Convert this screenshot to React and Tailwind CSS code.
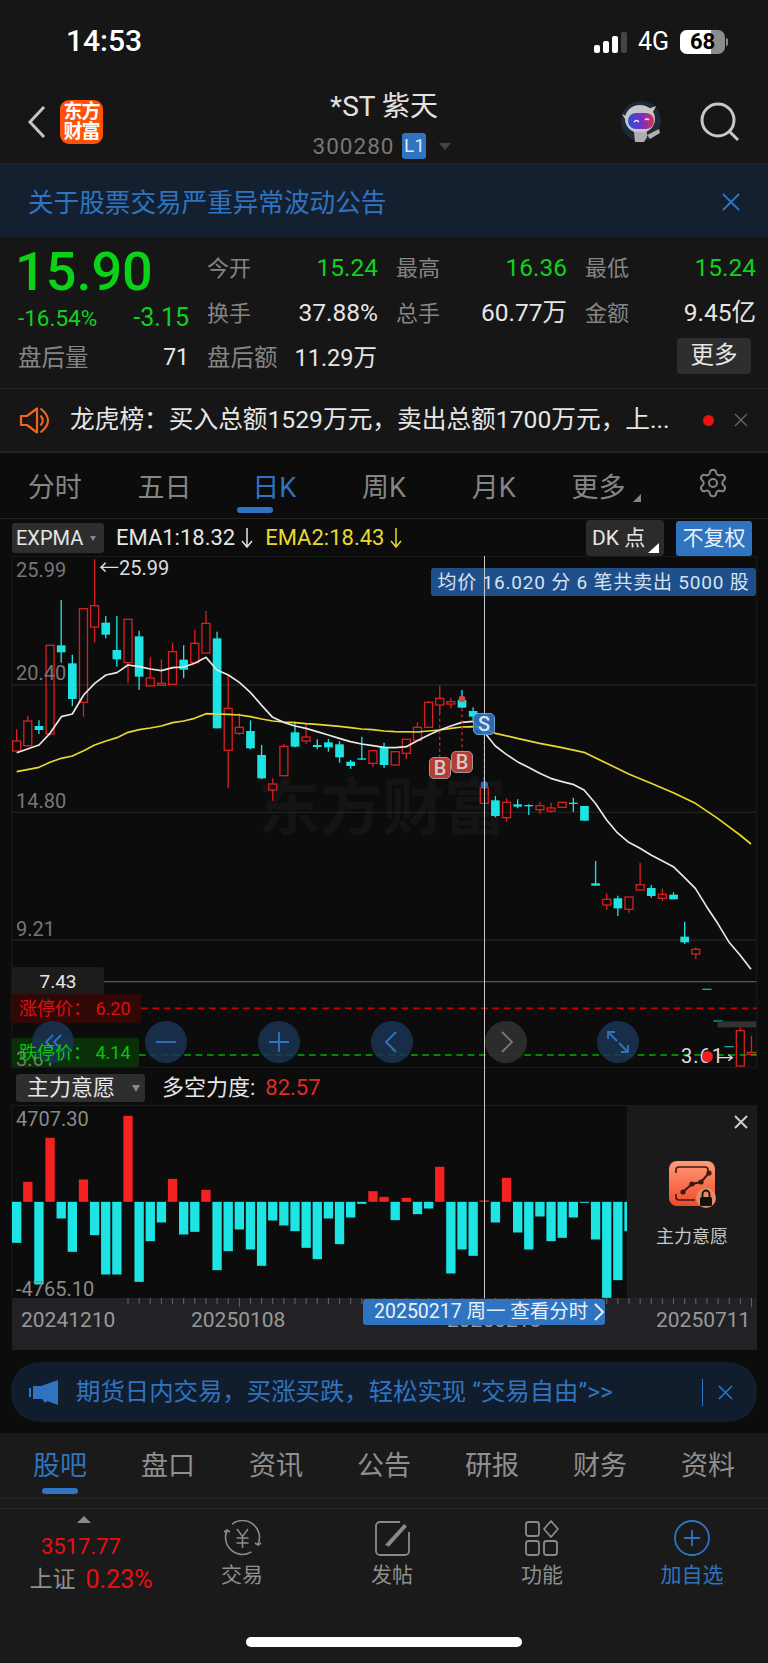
import { Settings } from "lucide-react";

const BLUE = "#2f74c0";

// coordinates of the k-line chart are in 3x page units, y measured from page y=520
// [type, wick top, body top, body bottom, wick bottom]
const candles = [
  ["R", 628, 663, 693, 693], ["R", 587, 603, 677, 677], ["C", 601, 618, 630, 642], ["R", 376, 376, 642, 642],
  ["C", 240, 376, 397, 428], ["C", 404, 430, 537, 558], ["R", 266, 266, 547, 590], ["R", 118, 257, 321, 368],
  ["C", 288, 308, 344, 355], ["C", 288, 390, 418, 440], ["R", 298, 298, 428, 490], ["C", 332, 349, 470, 510],
  ["R", 412, 474, 498, 498], ["R", 418, 490, 496, 496], ["R", 368, 395, 493, 493], ["C", 376, 419, 449, 475],
  ["R", 330, 370, 428, 428], ["R", 273, 310, 399, 399], ["C", 335, 355, 625, 625], ["R", 465, 565, 691, 805],
  ["R", 580, 622, 640, 645], ["C", 601, 633, 685, 688], ["C", 675, 705, 775, 778], ["R", 775, 792, 810, 842],
  ["R", 672, 679, 767, 767], ["C", 605, 637, 680, 682], ["R", 612, 651, 663, 672], ["C", 658, 675, 681, 688],
  ["C", 657, 667, 682, 695], ["C", 664, 673, 712, 728], ["C", 720, 725, 738, 746], ["C", 650, 715, 719, 719],
  ["R", 692, 692, 730, 742], ["C", 668, 682, 735, 744], ["R", 695, 695, 735, 735], ["R", 658, 658, 700, 718],
  ["R", 607, 622, 661, 661], ["R", 543, 547, 622, 622], ["R", 497, 535, 555, 582], ["R", 533, 545, 552, 565],
  ["C", 510, 540, 563, 563], ["C", 562, 573, 590, 600], ["R", 772, 803, 850, 850], ["C", 828, 841, 888, 892],
  ["R", 835, 847, 893, 905], ["C", 838, 853, 860, 865], ["C", 853, 855, 859, 885], ["R", 845, 857, 869, 882],
  ["R", 848, 864, 873, 878], ["R", 847, 847, 862, 862], ["C", 833, 848, 852, 875], ["C", 858, 858, 902, 902],
  ["C", 1023, 1090, 1097, 1097], ["R", 1120, 1138, 1155, 1170], ["C", 1127, 1135, 1165, 1188], ["R", 1131, 1131, 1168, 1178],
  ["R", 1028, 1094, 1110, 1110], ["C", 1095, 1104, 1128, 1133], ["R", 1106, 1123, 1135, 1144], ["C", 1117, 1124, 1138, 1138],
  ["C", 1205, 1250, 1267, 1272], ["R", 1282, 1288, 1302, 1318], ["D", 1408, 1408, 1408, 1408], ["D", 1503, 1503, 1503, 1503],
  ["D", 1580, 1580, 1580, 1580], ["R", 1522, 1532, 1638, 1638], ["R", 1547, 1597, 1603, 1603],
];

const candleX = (i) => 50 + i * 33.4;

const ema1 =
  "50,698 117,675 150,640 184,590 217,582 251,525 284,490 318,465 351,458 384,435 418,440 451,447 484,452 518,443 551,441 584,430 618,412 651,450 685,465 718,487 751,517 785,556 818,592 851,607 885,618 918,625 951,635 985,645 1018,655 1051,665 1085,672 1118,677 1152,682 1185,683 1219,680 1252,662 1286,645 1319,630 1352,618 1386,607 1419,604 1453,637 1486,678 1519,703 1552,725 1585,742 1619,760 1652,775 1686,785 1719,793 1752,810 1786,850 1820,900 1852,938 1886,967 1920,985 1953,1005 1986,1022 2020,1040 2053,1072 2086,1105 2120,1160 2153,1210 2186,1265 2220,1305 2253,1348";
const ema2 =
  "50,755 117,742 150,727 184,715 217,708 251,692 284,675 318,663 351,653 384,637 418,629 451,624 484,618 518,608 551,603 584,595 618,581 651,582 685,583 718,585 751,590 785,597 818,603 851,606 885,608 918,611 951,613 985,616 1018,619 1051,623 1085,627 1118,629 1152,633 1185,635 1252,636 1286,633 1319,630 1352,625 1386,621 1419,620 1453,627 1486,640 1552,655 1619,670 1686,683 1752,697 1820,730 1886,762 1953,790 2020,818 2086,850 2153,895 2186,920 2220,945 2253,972";

// bar tops (or bottoms) of the main force chart, baseline 320
const bars = [
  443, 260, 568, 128, 370, 470, 253, 420, 538, 538, 62, 560, 438, 382, 251, 418, 410, 284, 525, 468, 403, 463, 512,
  376, 391, 408, 458, 492, 370, 447, 367, 326, 288, 305, 375, 308, 357, 340, 215, 535, 463, 482, 316, 382, 248, 412,
  463, 364, 438, 428, 367, 323, 433, 608, 555, 408,
];

function Candle({ c, i }) {
  const x = candleX(i);
  const [type, wt, bt, bb, wb] = c;
  if (type === "D") return <rect x={x - 14} y={wt - 2} width="28" height="4" fill="#16a8a8" />;
  if (type === "C") {
    return (
      <g>
        <line x1={x} x2={x} y1={wt} y2={wb} stroke="#1de3e3" strokeWidth="4" />
        <rect x={x - 13} y={bt} width="26" height={bb - bt} fill="#1de3e3" />
      </g>
    );
  }
  return (
    <g stroke="#d61f1f" strokeWidth="4" fill="none">
      {wt < bt && <line x1={x} x2={x} y1={wt} y2={bt} />}
      {wb > bb && <line x1={x} x2={x} y1={bb} y2={wb} />}
      <rect x={x - 12} y={bt} width="24" height={Math.max(bb - bt, 3)} />
    </g>
  );
}

function MainChart() {
  return (
    <svg viewBox="0 108 2304 1536" className="block w-[768px] h-[512px]">
      <g stroke="#222" strokeWidth="4">
        <line x1="35" x2="2270" y1="495" y2="495" />
        <line x1="35" x2="2270" y1="877" y2="877" />
        <line x1="35" x2="2270" y1="1260" y2="1260" />
      </g>
      <g stroke="#1c1c1c" strokeWidth="3">
        <line x1="35" x2="2270" y1="109" y2="109" />
        <line x1="35" x2="35" y1="108" y2="1644" />
        <line x1="2270" x2="2270" y1="108" y2="1644" />
        <line x1="35" x2="2270" y1="1643" y2="1643" />
      </g>
      <line x1="312" x2="2270" y1="1385" y2="1385" stroke="#555" strokeWidth="4" />
      {candles.map((c, i) => (
        <Candle key={i} c={c} i={i} />
      ))}
      <polyline points={ema2} fill="none" stroke="#e9d92e" strokeWidth="5" strokeLinejoin="round" />
      <polyline points={ema1} fill="none" stroke="#e8e8e8" strokeWidth="5" strokeLinejoin="round" />
      <line x1="1319" x2="1319" y1="560" y2="710" stroke="#c02a2a" strokeWidth="4" strokeDasharray="9 9" />
      <line x1="1386" x2="1386" y1="565" y2="695" stroke="#c02a2a" strokeWidth="4" strokeDasharray="9 9" />
      <line x1="1453" x2="1453" y1="645" y2="795" stroke="#3d7fd0" strokeWidth="4" strokeDasharray="9 9" />
      <circle cx="1386" cy="537" r="10" fill="#c8504a" />
      <circle cx="1453" cy="795" r="11" fill="#2f6cc8" />
      <line x1="423" x2="2270" y1="1465" y2="1465" stroke="#c80000" strokeWidth="5" strokeDasharray="20 14" />
      <line x1="417" x2="2270" y1="1605" y2="1605" stroke="#00b000" strokeWidth="5" strokeDasharray="20 14" />
      <rect x="2153" y="1504" width="115" height="18" fill="#333" />
      <path d="M2153 1613h44m-12-9l12 9l-12 9" fill="none" stroke="#ddd" strokeWidth="4" />
    </svg>
  );
}

function ForceChart() {
  return (
    <svg viewBox="0 30 2304 578" className="block w-[768px] h-[193px]">
      <g stroke="#1c1c1c" strokeWidth="3">
        <line x1="35" x2="2270" y1="31" y2="31" />
        <line x1="35" x2="35" y1="30" y2="608" />
      </g>
      {bars.map((v, i) => {
        const x = candleX(i) - 14;
        if (v < 320) return <rect key={i} x={x} y={v} width="28" height={320 - v} fill="#f52222" />;
        return <rect key={i} x={x} y="320" width="28" height={v - 320} fill="#1ee4e4" />;
      })}
    </svg>
  );
}

function CircleBtn({ children, gray }) {
  return (
    <div className={`absolute top-[465px] size-[42px] rounded-full flex items-center justify-center ${gray ? "bg-[#2e2e2e]/95" : "bg-[#1a3454]/85"}`}>
      {children}
    </div>
  );
}

function ChevronIcon({ d, color = BLUE }) {
  return (
    <svg viewBox="0 0 24 24" className="size-[24px]" fill="none" stroke={color} strokeWidth="1.8">
      <path d={d} />
    </svg>
  );
}

function Robot() {
  return (
    <svg viewBox="0 0 46 46" className="w-[46px] h-[46px] -mr-[3px]">
      <defs>
        <linearGradient id="visorGrad" x1="0" y1="0" x2="1" y2="0">
          <stop offset="0" stopColor="#2c4fd8" />
          <stop offset="0.55" stopColor="#7a2fc0" />
          <stop offset="1" stopColor="#e0304a" />
        </linearGradient>
      </defs>
      <circle cx="23" cy="22" r="20" fill="#1d2a3a" />
      <path d="M4 15l6 3v7zM38 7l-4 8l-4-5z" fill="#c4c4c4" />
      <ellipse cx="22" cy="20" rx="15" ry="14" fill="#c6c6c6" />
      <rect x="10" y="14" width="26" height="16" rx="8" fill="url(#visorGrad)" />
      <path d="M16 23q2.5-3 5 0M27 21q2-2 4 0" stroke="#e8e8f8" strokeWidth="1.6" fill="none" />
      <path d="M16 33h13v5l-3 5h-9zM29 36l8-4l4-2l1 4l-10 6z" fill="#aeaeae" />
    </svg>
  );
}

const navItems = [
  {
    label: "交易",
    icon: (
      <svg viewBox="0 0 41 36" className="w-[41px] h-[36px]" fill="none" stroke="#8a8a8a" strokeWidth="1.6">
        <path d="M5.1 10.3A17 17 0 0 0 29.5 31.9" />
        <path d="M10 4.1A17 17 0 0 1 36 24.4" />
        <path d="M2 12l3-2l3 2M33 23l3 2l3-2" />
        <path d="M15 9l5.5 7.5L26 9M20.5 16.5V28M14.5 18h12M14.5 23h12" />
      </svg>
    ),
    color: "text-[#8f8f8f]",
  },
  {
    label: "发帖",
    icon: (
      <svg viewBox="0 0 36 36" className="w-[36px] h-[36px]" fill="none" stroke="#8a8a8a" strokeWidth="1.8">
        <path d="M26 2H6a4 4 0 0 0-4 4v25a4 4 0 0 0 4 4h25a4 4 0 0 0 4-4V12" />
        <path d="M11 25l19-21l3 2.5l-18 20z" fill="#8a8a8a" stroke="none" />
      </svg>
    ),
    color: "text-[#8f8f8f]",
  },
  {
    label: "功能",
    icon: (
      <svg viewBox="0 0 34 36" className="w-[34px] h-[36px]" fill="none" stroke="#8a8a8a" strokeWidth="1.8">
        <rect x="1" y="2" width="13" height="14" rx="2.5" />
        <rect x="1" y="21" width="13" height="14" rx="2.5" />
        <rect x="19" y="21" width="13" height="14" rx="2.5" />
        <path d="M26 1l7 8l-7 8l-7-8z" strokeLinejoin="round" />
      </svg>
    ),
    color: "text-[#8f8f8f]",
  },
  {
    label: "加自选",
    icon: (
      <svg viewBox="0 0 36 36" className="w-[36px] h-[36px]" fill="none" stroke={BLUE} strokeWidth="1.8">
        <circle cx="18" cy="18" r="17" />
        <path d="M18 10v16M10 18h16" />
      </svg>
    ),
    color: "text-[#2f74c0]",
  },
];

const stats = [
  ["今开", "15.24", "text-[#0fd21f]"],
  ["最高", "16.36", "text-[#0fd21f]"],
  ["最低", "15.24", "text-[#0fd21f]"],
  ["换手", "37.88%", "text-[#e6e6e6]"],
  ["总手", "60.77万", "text-[#e6e6e6]"],
  ["金额", "9.45亿", "text-[#e6e6e6]"],
];

export default function App() {
  return (
    <div className="w-[768px] h-[1663px] overflow-hidden flex flex-col bg-[#0c0c0c] font-[Roboto,'Noto_Sans_CJK_SC',sans-serif] text-[#e6e6e6]">
      {/* status bar */}
      <div className="h-[75px] shrink-0 bg-[#161616] flex items-start justify-between pl-[66px] pr-[40px] pt-[24px]">
        <span className="text-[30px] leading-[34px] font-medium text-white">14:53</span>
        <div className="flex items-center gap-[11px] pt-[6px]">
          <div className="flex items-end gap-[3px] h-[21px]">
            <div className="w-[6px] h-[8px] rounded-[2px] bg-white" />
            <div className="w-[6px] h-[12px] rounded-[2px] bg-white" />
            <div className="w-[6px] h-[17px] rounded-[2px] bg-white" />
            <div className="w-[6px] h-[21px] rounded-[2px] bg-[#444]" />
          </div>
          <span className="text-[25px] leading-[24px] text-white">4G</span>
          <div className="flex items-center gap-[1px]">
            <div className="relative w-[45px] h-[24px] rounded-[7px] bg-[#8c8c8c] overflow-hidden">
              <div className="w-[31px] h-full bg-white" />
              <span className="absolute inset-0 flex items-center justify-center text-[22px] font-bold text-black leading-none">68</span>
            </div>
            <div className="w-[2px] h-[8px] rounded-r bg-[#8c8c8c]" />
          </div>
        </div>
      </div>

      {/* nav */}
      <div className="h-[89px] shrink-0 bg-[#161616] border-b border-[#262626] grid grid-cols-[1fr_auto_1fr] items-start">
        <div className="flex items-center gap-[14px] pl-[27px] pt-[25px]">
          <svg viewBox="0 0 19 32" className="w-[19px] h-[32px]" fill="none" stroke="#c4c4c4" strokeWidth="3">
            <path d="M17 1L3 16l14 15" />
          </svg>
          <div className="w-[43px] h-[44px] rounded-[9px] bg-[#ff5208] flex flex-col items-center justify-center text-white font-bold text-[19px] leading-[20px] tracking-[-1px]">
            <span>东方</span>
            <span>财富</span>
          </div>
        </div>
        <div className="flex flex-col items-center pt-[14px]">
          <span className="text-[28px] leading-[36px] text-[#e2e2e2]">*ST 紫天</span>
          <div className="flex items-center mt-[8px] -ml-[4px]">
            <span className="text-[22.5px] leading-[26px] tracking-[1px] text-[#777]">300280</span>
            <span className="ml-[8px] w-[24px] h-[26px] rounded-[3px] bg-[#2f74c0] flex items-center justify-center text-[19px] text-[#dbe8f7]">L1</span>
            <span className="ml-[13px] w-0 h-0 border-x-[6px] border-x-transparent border-t-[7px] border-t-[#444]" />
          </div>
        </div>
        <div className="flex items-center justify-end gap-[38px] pr-[27px] pt-[24px]">
          <Robot />
          <svg viewBox="0 0 42 40" className="w-[42px] h-[40px]" fill="none" stroke="#c8c8c8" strokeWidth="3">
            <circle cx="19" cy="18" r="16" />
            <path d="M31 30l8 8" />
          </svg>
        </div>
      </div>

      {/* notice */}
      <div className="h-[73px] shrink-0 bg-[#14202f] flex items-center justify-between pl-[28px] pr-[28px] pt-[6px]">
        <span className="text-[25.6px] leading-none text-[#2f74c0]">关于股票交易严重异常波动公告</span>
        <svg viewBox="0 0 18 18" className="size-[18px] -translate-y-[2px]" fill="none" stroke={BLUE} strokeWidth="1.8">
          <path d="M1 1l16 16M17 1L1 17" />
        </svg>
      </div>

      {/* quote */}
      <div className="h-[151px] shrink-0 bg-[#161616] pt-[9px] pl-[18px] grid grid-cols-[171px_171px_171px_171px] grid-rows-[45px_45px_45px] gap-x-[18px]">
        <div className="row-span-2 flex flex-col">
          <span className="text-[54px] leading-[50px] font-medium text-[#0ad317] -ml-[3px] mt-[1px]">15.90</span>
          <div className="flex items-center justify-between mt-[8px] text-[#0fd21f]">
            <span className="text-[22.5px] leading-[26px]">-16.54%</span>
            <span className="text-[25px] leading-[26px]">-3.15</span>
          </div>
        </div>
        {stats.map(([k, v, cls]) => (
          <div key={k} className="flex items-center justify-between">
            <span className="text-[22px] text-[#858585]">{k}</span>
            <span className={`text-[24.5px] ${cls}`}>{v}</span>
          </div>
        ))}
        <div className="flex items-center justify-between">
          <span className="text-[23.5px] text-[#858585]">盘后量</span>
          <span className="text-[23px]">71</span>
        </div>
        <div className="flex items-center justify-between">
          <span className="text-[23.5px] text-[#858585]">盘后额</span>
          <span className="text-[23.5px] mr-[1px]">11.29万</span>
        </div>
        <div />
        <div className="flex items-center justify-end">
          <div className="mr-[5px] -mt-[6px] w-[74px] h-[36px] rounded-[4px] bg-[#2e2e2e] flex items-center justify-center text-[23.5px]">更多</div>
        </div>
      </div>

      {/* ticker */}
      <div className="h-[65px] shrink-0 bg-[#161616] border-t border-[#222] border-b-2 border-b-[#222] flex items-center pl-[19px]">
        <svg viewBox="0 0 31 27" className="w-[31px] h-[27px]" fill="none" stroke="#f0641e" strokeWidth="2.2">
          <path d="M2 9h6l10-7.5v24L8 18H2z" strokeLinejoin="round" />
          <path d="M21.5 8.5q4.5 5 0 10M21.5 1.5q15 12 0 24" />
        </svg>
        <span className="ml-[20px] w-[608px] text-[24.7px] leading-[32px] whitespace-nowrap">龙虎榜：买入总额1529万元，卖出总额1700万元，上...</span>
        <span className="ml-[25px] size-[11px] rounded-full bg-[#f01010]" />
        <svg viewBox="0 0 14 14" className="ml-[20px] size-[14px]" fill="none" stroke="#666" strokeWidth="1.4">
          <path d="M1 1l12 12M13 1L1 13" />
        </svg>
      </div>

      {/* period tabs */}
      <div className="h-[66px] shrink-0 bg-[#0c0c0c] border-b border-[#222] grid grid-cols-7">
        {["分时", "五日", "日K", "周K", "月K", "更多"].map((t, i) => (
          <div key={t} className={`relative flex items-center justify-center pt-[6px] ${i === 5 ? "pl-[6px]" : ""}`}>
            <span className={`text-[27px] leading-none ${i === 2 ? "text-[#2f74c0]" : "text-[#858585]"}`}>{t}</span>
            {i === 2 && <span className="absolute left-[18px] bottom-[5px] w-[36px] h-[6px] rounded-full bg-[#2f74c0]" />}
            {i === 5 && <span className="ml-[8px] mt-[18px] w-0 h-0 border-l-[8px] border-l-transparent border-b-[8px] border-b-[#858585]" />}
          </div>
        ))}
        <div className="flex items-center justify-center pb-[6px]">
          <Settings size={32} strokeWidth={1.5} color="#858585" />
        </div>
      </div>

      <div className="relative shrink-0">
        {/* indicator header */}
        <div className="h-[37px] flex items-start">
          <div className="ml-[12px] mt-[4px] w-[92px] h-[30px] rounded-[3px] bg-[#2e2e2e] flex items-center pl-[4px] text-[20px] leading-none">
            EXPMA
            <span className="ml-[7px] w-0 h-0 border-x-[3.5px] border-x-transparent border-t-[5px] border-t-[#888]" />
          </div>
          <div className="ml-[12px] mt-[8px] flex items-center text-[22px] leading-[22px]">
            EMA1:18.32
            <svg viewBox="0 0 12 20" className="ml-[6px] w-[12px] h-[20px]" fill="none" stroke="#e6e6e6" strokeWidth="1.5">
              <path d="M6 0v19M1 13l5 6l5-6" />
            </svg>
          </div>
          <div className="ml-[12px] mt-[8px] flex items-center text-[22px] leading-[22px] text-[#e9d92e]">
            EMA2:18.43
            <svg viewBox="0 0 12 20" className="ml-[6px] w-[12px] h-[20px]" fill="none" stroke="#e9d92e" strokeWidth="1.5">
              <path d="M6 0v19M1 13l5 6l5-6" />
            </svg>
          </div>
          <div className="relative ml-auto mt-[1px] w-[78px] h-[36px] rounded-[4px] bg-[#2b2b2b] flex items-center pl-[6px] text-[21px] leading-none">
            DK 点
            <span className="absolute right-[5px] bottom-[3px] w-0 h-0 border-l-[11px] border-l-transparent border-b-[10px] border-b-white" />
          </div>
          <div className="ml-[12px] mr-[16px] mt-[2px] w-[76px] h-[35px] rounded-[3px] bg-[#2f74c0] flex items-center justify-center text-[21px] leading-none text-[#e8f0fa]">不复权</div>
        </div>

        {/* candles */}
        <div className="relative h-[512px]">
          <div className="absolute left-[258px] top-[218px] text-[62px] leading-[70px] font-bold text-[#141414] whitespace-nowrap">东方财富</div>
          <div className="absolute inset-0">
            <MainChart />
          </div>
          <span className="absolute left-[16px] top-[2px] text-[20px] leading-[24px] text-[#777]">25.99</span>
          <span className="absolute left-[16px] top-[105px] text-[20px] leading-[24px] text-[#777]">20.40</span>
          <span className="absolute left-[16px] top-[233px] text-[20px] leading-[24px] text-[#777]">14.80</span>
          <span className="absolute left-[16px] top-[361px] text-[20px] leading-[24px] text-[#777]">9.21</span>
          <span className="absolute left-[99px] top-[0px] text-[20px] leading-[24px] text-[#ddd]">←25.99</span>
          <div className="absolute left-[431px] top-[12px] w-[325px] h-[28px] rounded-[3px] bg-[#1f4f8a] flex items-center justify-center text-[19px] leading-none tracking-[0.8px] text-[#d5e2f2] whitespace-nowrap">
            均价 16.020 分 6 笔共卖出 5000 股
          </div>
          <div className="absolute left-[12px] top-[411px] w-[92px] h-[28px] rounded-t-[3px] bg-[#1c1c1c] flex items-center justify-center text-[19px] leading-none">7.43</div>
          <div className="absolute left-[12px] top-[438px] w-[129px] h-[29px] rounded-[2px] bg-[#300808] flex items-center pl-[7px] text-[18px] leading-none text-[#e00d0d] whitespace-nowrap">涨停价： 6.20</div>
          <div className="absolute left-[12px] top-[482px] w-[127px] h-[29px] rounded-[2px] bg-[#0a300a]" />
          <span className="absolute left-[16px] top-[491px] text-[20px] leading-[24px] text-[#777]">3.61</span>
          <span className="absolute left-[681px] top-[488px] text-[20px] leading-[24px] text-[#ddd] tracking-[1px]">3.61</span>
          <div className="absolute left-[702px] top-[495px] size-[11px] rounded-full bg-[#f02020]" />
          <div className="absolute z-10 left-[429px] top-[201px] size-[22px] rounded-[5px] bg-[#b83a30] border border-[#999] flex items-center justify-center text-[20px] font-medium leading-none text-[#ccc]">B</div>
          <div className="absolute z-10 left-[451px] top-[195px] size-[22px] rounded-[5px] bg-[#b83a30] border border-[#999] flex items-center justify-center text-[20px] font-medium leading-none text-[#ccc]">B</div>
          <div className="absolute z-10 left-[473px] top-[157px] size-[22px] rounded-[5px] bg-[#2f74c0]/90 border border-[#6a9ed8] flex items-center justify-center text-[20px] font-medium leading-none text-[#d5e2f2]">S</div>

          <div className="absolute left-[32px] top-0">
            <CircleBtn>
              <ChevronIcon d="M12 5l-7 7l7 7M20 5l-7 7l7 7" />
            </CircleBtn>
          </div>
          <div className="absolute left-[145px] top-0">
            <CircleBtn>
              <ChevronIcon d="M2 12h20" />
            </CircleBtn>
          </div>
          <div className="absolute left-[258px] top-0">
            <CircleBtn>
              <ChevronIcon d="M2 12h20M12 2v20" />
            </CircleBtn>
          </div>
          <div className="absolute left-[371px] top-0">
            <CircleBtn>
              <ChevronIcon d="M16 2L6 12l10 10" />
            </CircleBtn>
          </div>
          <div className="absolute left-[485px] top-0">
            <CircleBtn gray>
              <ChevronIcon d="M8 2l10 10L8 22" color="#777" />
            </CircleBtn>
          </div>
          <div className="absolute left-[597px] top-0">
            <CircleBtn>
              <ChevronIcon d="M2 9V2h7M2 2l9 9M22 15v7h-7M22 22l-9-9" />
            </CircleBtn>
          </div>
          <span className="absolute left-[19px] top-[482px] h-[29px] flex items-center text-[18px] leading-none text-[#05c805] whitespace-nowrap">跌停价： 4.14</span>
        </div>

        {/* main force header */}
        <div className="h-[37px] flex items-start">
          <div className="ml-[16px] mt-[6px] w-[129px] h-[28px] rounded-[3px] bg-[#2e2e2e] flex items-center pl-[11px] text-[22px] leading-none">
            主力意愿
            <span className="ml-[17px] w-0 h-0 border-x-[4px] border-x-transparent border-t-[7px] border-t-[#888]" />
          </div>
          <div className="ml-[17px] mt-[8px] text-[22px] leading-[24px]">
            多空力度:<span className="ml-[10px] text-[#e02a2a]">82.57</span>
          </div>
        </div>

        {/* main force chart */}
        <div className="relative h-[193px]">
          <ForceChart />
          <span className="absolute left-[16px] top-[2px] text-[20px] leading-[24px] text-[#8a8a8a]">4707.30</span>
          <span className="absolute left-[16px] top-[172px] text-[20px] leading-[24px] text-[#8a8a8a]">-4765.10</span>
          <div className="absolute left-[627px] top-0 w-[130px] h-full bg-[#1a1a1a] flex flex-col items-center">
            <svg viewBox="0 0 14 14" className="self-end mt-[10px] mr-[9px] size-[14px]" fill="none" stroke="#ccc" strokeWidth="2">
              <path d="M1 1l12 12M13 1L1 13" />
            </svg>
            <svg viewBox="0 0 58 52" className="mt-[32px] ml-[12px] w-[58px] h-[52px]">
              <defs>
                <linearGradient id="lockGrad" x1="0" y1="0" x2="0" y2="1">
                  <stop offset="0" stopColor="#ff9a78" />
                  <stop offset="1" stopColor="#ef4a2c" />
                </linearGradient>
              </defs>
              <rect x="0" y="0" width="46" height="45" rx="8" fill="url(#lockGrad)" />
              <path d="M7 12V9a3 3 0 0 1 3-3h26a3 3 0 0 1 3 3v3M7 33v3a3 3 0 0 0 3 3h16" fill="none" stroke="#3a1a10" strokeWidth="1.6" />
              <path d="M14 31l9-8l9-2l8-9" fill="none" stroke="#3a1a10" strokeWidth="2" />
              <circle cx="14" cy="31" r="2.6" fill="#3a1a10" />
              <circle cx="23" cy="23" r="2.6" fill="#3a1a10" />
              <circle cx="32" cy="21" r="2.6" fill="#3a1a10" />
              <circle cx="40" cy="12" r="2.6" fill="#3a1a10" />
              <circle cx="37" cy="37" r="10" fill="#e88a68" />
              <rect x="31" y="36" width="12" height="9" rx="1.5" fill="#111" />
              <path d="M33.5 36v-3a3.5 3.5 0 0 1 7 0v3" fill="none" stroke="#111" strokeWidth="1.8" />
            </svg>
            <span className="mt-[12px] text-[18px] leading-[24px] text-[#c8c8c8]">主力意愿</span>
          </div>
        </div>

        <div className="absolute left-[484px] top-[37px] bottom-0 w-px bg-[#c8c8c8]" />
      </div>

      {/* time axis */}
      <div className="relative ml-[12px] w-[745px] h-[52px] shrink-0 bg-[#222226]">
        <svg viewBox="0 0 2235 156" className="absolute inset-0 w-[745px] h-[52px]">
          {candles.map((_, i) =>
            i >= 10 ? (
              <line key={i} x1={candleX(i) - 36} x2={candleX(i) - 36} y1="0" y2={i === 20 || i === 66 ? 28 : 18} stroke="#666" strokeWidth="3" />
            ) : null,
          )}
        </svg>
        <span className="absolute left-[9px] top-[8px] text-[21px] leading-[28px] text-[#999]">20241210</span>
        <span className="absolute left-[179px] top-[8px] text-[21px] leading-[28px] text-[#999]">20250108</span>
        <span className="absolute left-[435px] top-[8px] text-[21px] leading-[28px] text-[#999]">20250218</span>
        <span className="absolute left-[644px] top-[8px] text-[21px] leading-[28px] text-[#999]">20250711</span>
        <div className="absolute left-[351px] top-[1px] w-[242px] h-[26px] rounded-[3px] bg-[#2f74c0] flex items-center pl-[11px] text-[19.5px] leading-none text-[#e8f0fa] whitespace-nowrap">
          20250217 周一 查看分时
          <svg viewBox="0 0 11 18" className="ml-[6px] w-[11px] h-[18px] shrink-0" fill="none" stroke="#e8f0fa" strokeWidth="2">
            <path d="M1 1l8 8l-8 8" />
          </svg>
        </div>
      </div>

      {/* promo */}
      <div className="h-[83px] shrink-0 pt-[12px] px-[11px]">
        <div className="h-[60px] rounded-[28px] bg-[#111d2c] flex items-center pl-[18px] pr-[24px]">
          <svg viewBox="0 0 30 25" className="w-[30px] h-[25px]" fill={BLUE}>
            <path d="M0 8h2v9H0zM4 6h8L29 0v25l-11-4l-2 2l-3-4H4z" />
          </svg>
          <span className="ml-[17px] text-[24.4px] leading-[32px] text-[#2f74c0] whitespace-nowrap">期货日内交易，买涨买跌，轻松实现 “交易自由”&gt;&gt;</span>
          <span className="ml-auto w-px h-[27px] bg-[#2f74c0]" />
          <svg viewBox="0 0 15 15" className="ml-[15px] size-[15px]" fill="none" stroke={BLUE} strokeWidth="1.6">
            <path d="M1 1l13 13M14 1L1 14" />
          </svg>
        </div>
      </div>

      {/* news tabs */}
      <div className="h-[66px] shrink-0 bg-[#1a1a1a] px-[6px] grid grid-cols-7 border-b border-[#242424]">
        {["股吧", "盘口", "资讯", "公告", "研报", "财务", "资料"].map((t, i) => (
          <div key={t} className="relative flex items-center justify-center pt-[2px]">
            <span className={`text-[27px] leading-none ${i === 0 ? "text-[#2f74c0]" : "text-[#8f8f8f]"}`}>{t}</span>
            {i === 0 && <span className="absolute left-[36px] bottom-[4px] w-[36px] h-[6px] rounded-full bg-[#2f74c0]" />}
          </div>
        ))}
      </div>
      <div className="h-[9px] shrink-0 bg-[#1a1a1a]" />

      {/* bottom bar */}
      <div className="relative flex-1 bg-[#1a1a1a] border-t border-[#262626]">
        <div className="grid grid-cols-[167px_repeat(4,150px)]">
          <div className="flex flex-col items-center pt-[7px]">
            <span className="w-0 h-0 border-x-[7px] border-x-transparent border-b-[7px] border-b-[#8a8a8a]" />
            <span className="mt-[11px] -ml-[5px] text-[22px] leading-[26px] text-[#ea0f0f]">3517.77</span>
            <div className="mt-[5px] ml-[15px] flex items-center gap-[10px] leading-[30px]">
              <span className="text-[23px] text-[#8f8f8f]">上证</span>
              <span className="text-[25px] text-[#ea0f0f]">0.23%</span>
            </div>
          </div>
          {navItems.map((n) => (
            <div key={n.label} className="flex flex-col items-center pt-[11px]">
              {n.icon}
              <span className={`mt-[6px] text-[21px] leading-[26px] ${n.color}`}>{n.label}</span>
            </div>
          ))}
        </div>
        <div className="absolute left-[246px] top-[128px] w-[276px] h-[10px] rounded-full bg-white" />
      </div>
    </div>
  );
}
